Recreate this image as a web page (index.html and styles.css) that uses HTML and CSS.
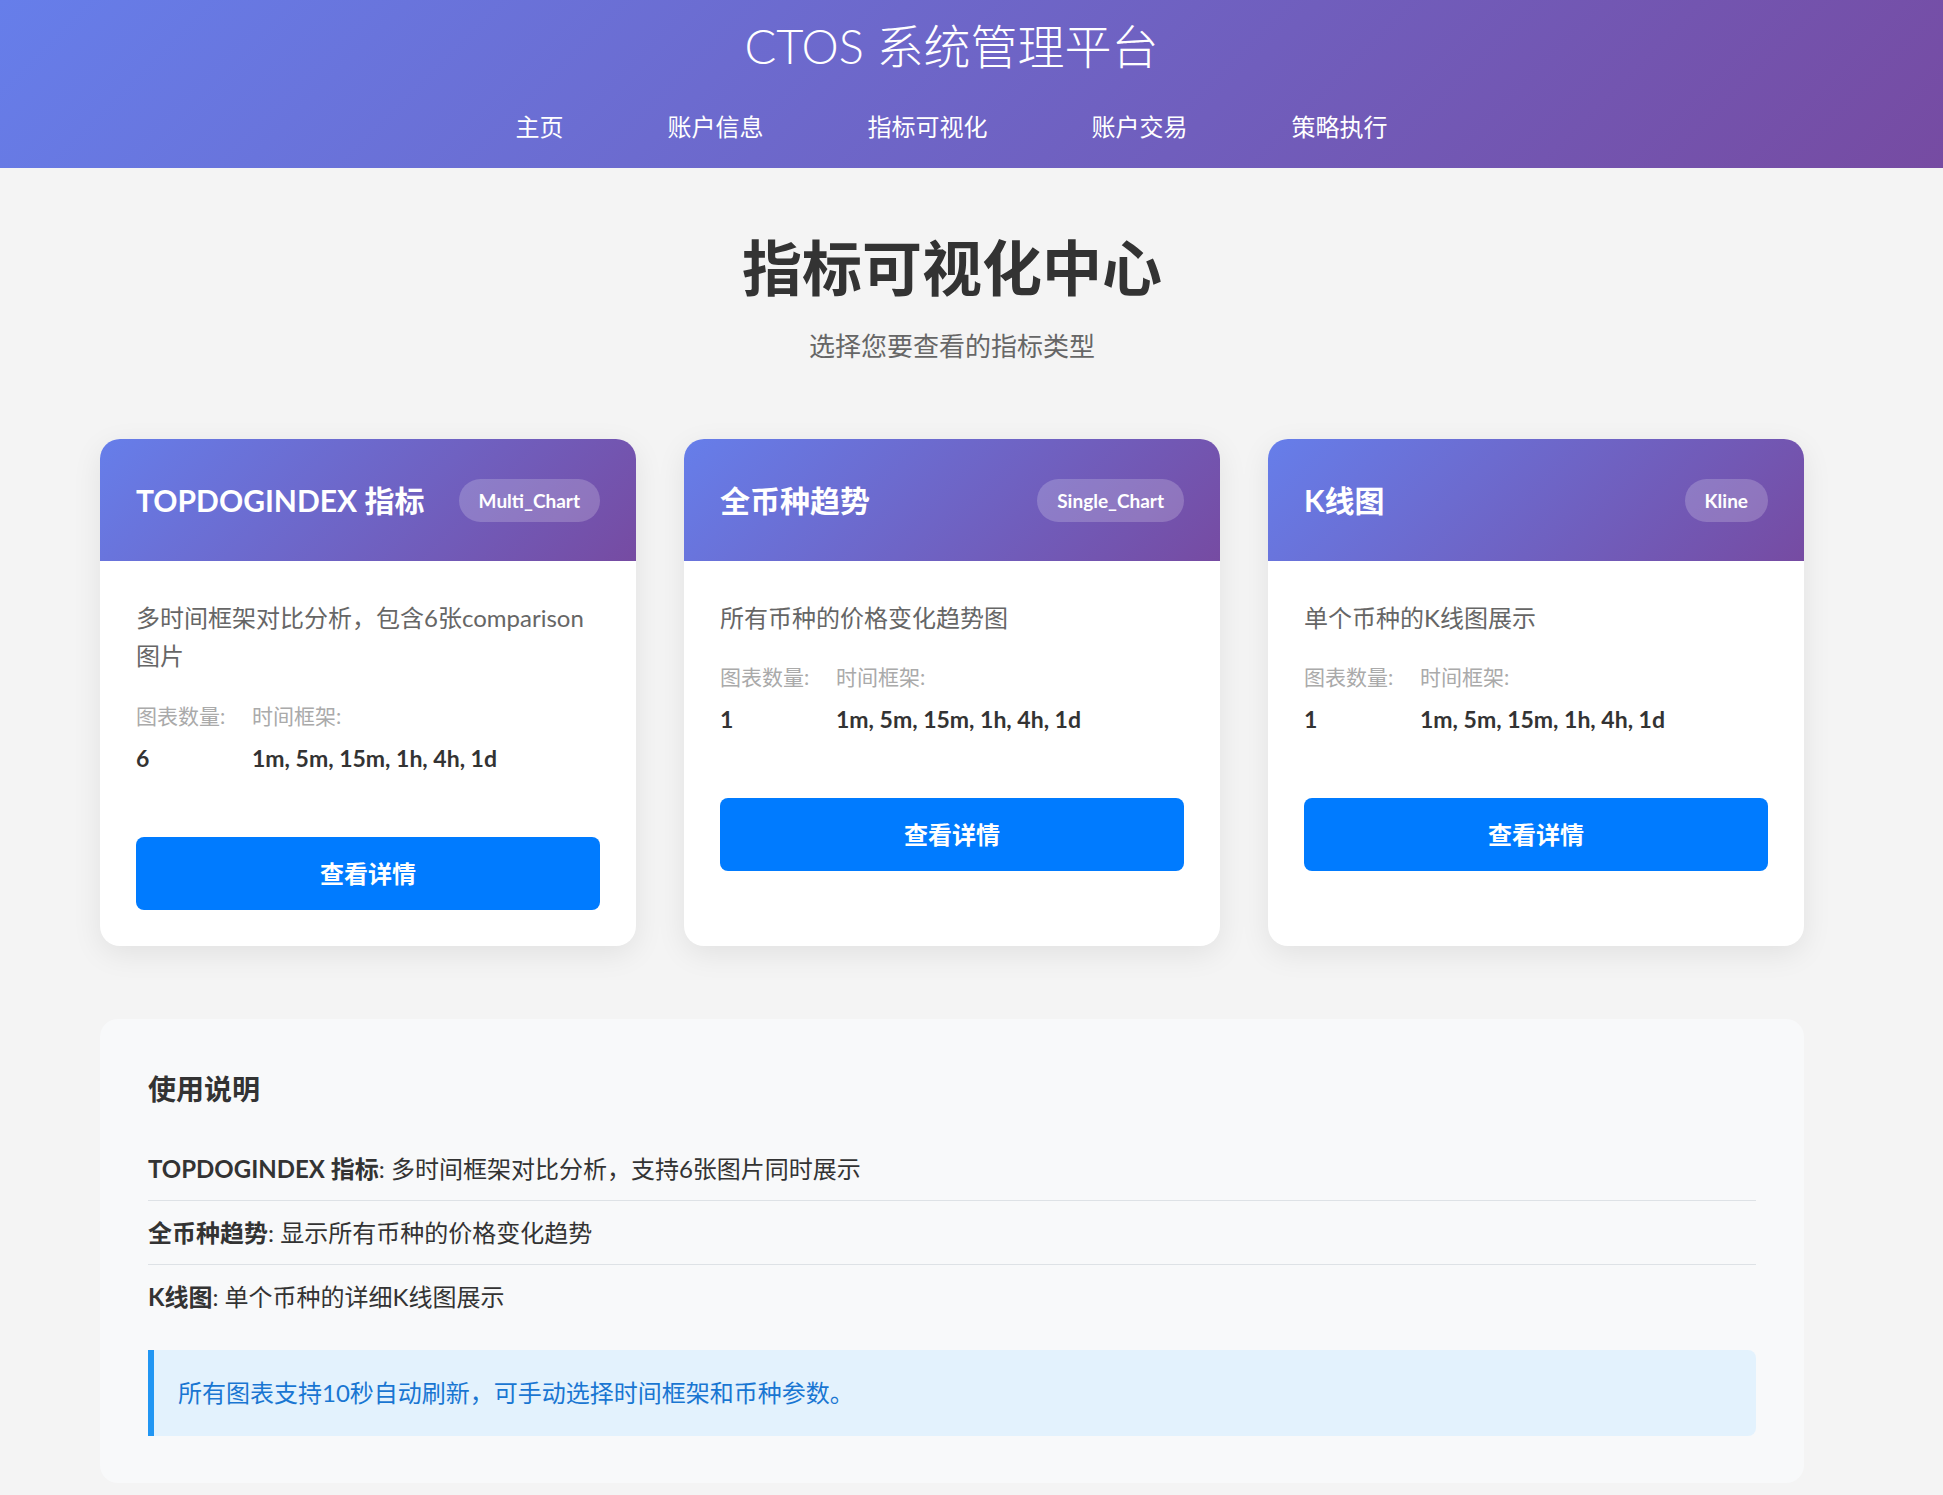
FILE: index.html
```html
<!DOCTYPE html>
<html lang="zh-CN">
<head>
<meta charset="UTF-8">
<title>指标可视化中心 - CTOS 系统管理平台</title>
<link rel="stylesheet" href="styles.css">
</head>
<body>
<header class="site-header">
  <div class="header-inner">
    <div class="brand">CTOS 系统管理平台</div>
    <nav class="nav">
      <a class="nav-link" href="#">主页</a>
      <a class="nav-link" href="#">账户信息</a>
      <a class="nav-link" href="#">指标可视化</a>
      <a class="nav-link" href="#">账户交易</a>
      <a class="nav-link" href="#">策略执行</a>
    </nav>
  </div>
</header>

<main class="container">
  <section class="intro">
    <h1 class="page-title">指标可视化中心</h1>
    <p class="page-subtitle">选择您要查看的指标类型</p>
  </section>

  <section class="card-grid">
    <article class="card">
      <div class="card-head">
        <h2 class="card-title">TOPDOGINDEX 指标</h2>
        <span class="badge">Multi_Chart</span>
      </div>
      <div class="card-body">
        <p class="card-desc">多时间框架对比分析，包含6张comparison图片</p>
        <div class="meta">
          <div class="meta-item meta-count">
            <span class="meta-label">图表数量:</span>
            <span class="meta-value">6</span>
          </div>
          <div class="meta-item">
            <span class="meta-label">时间框架:</span>
            <span class="meta-value">1m, 5m, 15m, 1h, 4h, 1d</span>
          </div>
        </div>
        <a class="btn" href="#">查看详情</a>
      </div>
    </article>

    <article class="card">
      <div class="card-head">
        <h2 class="card-title">全币种趋势</h2>
        <span class="badge">Single_Chart</span>
      </div>
      <div class="card-body">
        <p class="card-desc">所有币种的价格变化趋势图</p>
        <div class="meta">
          <div class="meta-item meta-count">
            <span class="meta-label">图表数量:</span>
            <span class="meta-value">1</span>
          </div>
          <div class="meta-item">
            <span class="meta-label">时间框架:</span>
            <span class="meta-value">1m, 5m, 15m, 1h, 4h, 1d</span>
          </div>
        </div>
        <a class="btn" href="#">查看详情</a>
      </div>
    </article>

    <article class="card">
      <div class="card-head">
        <h2 class="card-title">K线图</h2>
        <span class="badge">Kline</span>
      </div>
      <div class="card-body">
        <p class="card-desc">单个币种的K线图展示</p>
        <div class="meta">
          <div class="meta-item meta-count">
            <span class="meta-label">图表数量:</span>
            <span class="meta-value">1</span>
          </div>
          <div class="meta-item">
            <span class="meta-label">时间框架:</span>
            <span class="meta-value">1m, 5m, 15m, 1h, 4h, 1d</span>
          </div>
        </div>
        <a class="btn" href="#">查看详情</a>
      </div>
    </article>
  </section>

  <section class="help">
    <h3 class="help-title">使用说明</h3>
    <ul class="help-list">
      <li><strong>TOPDOGINDEX 指标</strong>: 多时间框架对比分析，支持6张图片同时展示</li>
      <li><strong>全币种趋势</strong>: 显示所有币种的价格变化趋势</li>
      <li><strong>K线图</strong>: 单个币种的详细K线图展示</li>
    </ul>
    <div class="notice">所有图表支持10秒自动刷新，可手动选择时间框架和币种参数。</div>
  </section>
</main>
</body>
</html>
```

FILE: styles.css
```css
* { box-sizing: border-box; }

html, body {
  margin: 0;
  padding: 0;
}

body {
  background: #f4f4f4;
  font-family: "Lato", "Noto Sans CJK SC", sans-serif;
  color: #333;
  min-height: 1495px;
}

/* Header */
.site-header {
  background: linear-gradient(135deg, #667eea 0%, #764ba2 100%);
  color: #fff;
  height: 168px;
}

.header-inner {
  padding: 16px 40px 0 0;
  display: flex;
  flex-direction: column;
  align-items: center;
}

.brand {
  font-size: 47px;
  font-weight: 300;
  line-height: 60px;
}

.nav {
  display: flex;
  gap: 64px;
  margin-top: 24px;
}

.nav-link {
  color: #fff;
  text-decoration: none;
  font-size: 24px;
  line-height: 34px;
  padding: 10px 20px;
}

/* Main */
.container {
  width: 1704px;
  margin-left: 100px;
  padding-top: 64px;
  padding-bottom: 12px;
}

.intro {
  text-align: center;
}

.page-title {
  margin: 0;
  font-size: 60px;
  line-height: 72px;
  font-weight: 700;
  color: #333;
}

.page-subtitle {
  margin: 23px 0 0;
  font-size: 26px;
  line-height: 39px;
  color: #666;
}

/* Cards */
.card-grid {
  display: grid;
  grid-template-columns: repeat(3, 1fr);
  gap: 48px;
  margin-top: 73px;
}

.card {
  background: #fff;
  border-radius: 20px;
  overflow: hidden;
  box-shadow: 0 8px 30px rgba(0, 0, 0, 0.08);
}

.card-head {
  background: linear-gradient(135deg, #667eea 0%, #764ba2 100%);
  color: #fff;
  height: 122px;
  padding: 0 36px;
  display: flex;
  align-items: center;
  justify-content: space-between;
}

.card-title {
  margin: 0;
  font-size: 30px;
  line-height: 44px;
  font-weight: 700;
}

.badge {
  background: rgba(255, 255, 255, 0.2);
  border-radius: 999px;
  padding: 9px 20px;
  font-size: 19px;
  line-height: 25px;
  font-weight: 700;
}

.card-body {
  padding: 38px 36px 36px;
}

.card-desc {
  margin: 0 0 26px;
  font-size: 24px;
  line-height: 38.4px;
  color: #666;
}

.meta {
  display: flex;
  gap: 24px;
  margin-bottom: 64px;
}

.meta-item {
  display: flex;
  flex-direction: column;
}

.meta-count {
  width: 92px;
}

.meta-label {
  font-size: 21px;
  line-height: 28px;
  color: #aaa;
  margin-bottom: 14px;
  white-space: nowrap;
}

.meta-value {
  font-size: 23px;
  line-height: 29px;
  font-weight: 700;
  color: #333;
  white-space: nowrap;
}

.btn {
  display: block;
  background: #007bff;
  color: #fff;
  text-decoration: none;
  text-align: center;
  border-radius: 8px;
  height: 73px;
  line-height: 73px;
  font-size: 24px;
  font-weight: 700;
}

/* Help */
.help {
  margin-top: 73px;
  background: #f8f9fa;
  border-radius: 18px;
  padding: 50px 48px 47px;
}

.help-title {
  margin: 0 0 28px;
  font-size: 28px;
  line-height: 40px;
  font-weight: 700;
  color: #333;
}

.help-list {
  list-style: none;
  margin: 0;
  padding: 0;
}

.help-list li {
  font-size: 24px;
  line-height: 31px;
  padding: 16px 0;
  border-bottom: 1px solid #dee2e6;
  color: #333;
}

.help-list li:last-child {
  border-bottom: none;
}

.help-list strong {
  font-weight: 700;
}

.notice {
  margin-top: 22px;
  background: #e3f2fd;
  border-left: 6px solid #2196f3;
  border-radius: 0 8px 8px 0;
  padding: 24px 24px;
  font-size: 24px;
  line-height: 38px;
  color: #1976d2;
}
```
